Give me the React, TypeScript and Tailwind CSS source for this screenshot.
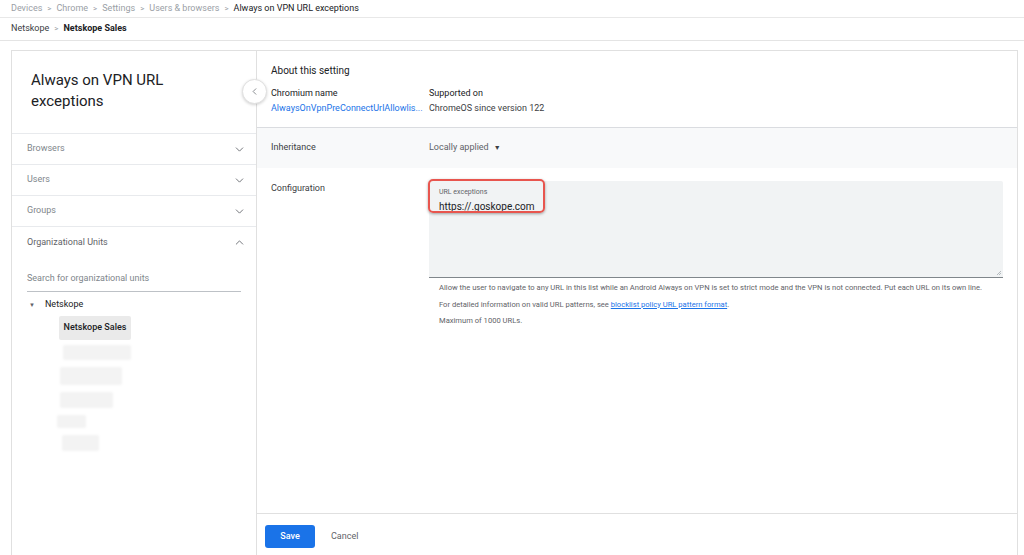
import { ChevronDown, ChevronUp, ChevronLeft } from "lucide-react";

const font = { fontFamily: "Roboto, 'Liberation Sans', sans-serif" };

function Crumbs() {
  const items = ["Devices", "Chrome", "Settings", "Users & browsers"];
  return (
    <div className="flex h-[18px] items-center border-b border-[#e8e8e8] px-[11px] text-[9px] text-[#9aa0a6]">
      {items.map((it) => (
        <span key={it} className="flex items-center">
          <span>{it}</span>
          <span className="mx-[5px] text-[8px]">&gt;</span>
        </span>
      ))}
      <span className="text-[#202124]">Always on VPN URL exceptions</span>
    </div>
  );
}

function OuCrumbs() {
  return (
    <div className="flex h-[23px] items-center border-b border-[#e4e4e4] px-[11px] text-[9px] text-[#3c4043]">
      <span>Netskope</span>
      <span className="mx-[5px] text-[8px] text-[#9aa0a6]">&gt;</span>
      <span className="font-bold text-[#202124]">Netskope Sales</span>
    </div>
  );
}

function SideRow({ label }: { label: string }) {
  return (
    <div className="flex h-[31px] items-center justify-between border-b border-[#e8eaed] pl-[15px] pr-[10px] text-[9px] text-[#80868b]">
      <span>{label}</span>
      <ChevronDown size={13} strokeWidth={1.6} className="text-[#5f6368]" />
    </div>
  );
}

function Sidebar() {
  const blurs = [
    "ml-[51px] w-[68px] h-[15px]",
    "ml-[48px] w-[62px] h-[18px]",
    "ml-[48px] w-[53px] h-[16px]",
    "ml-[45px] w-[29px] h-[13px]",
    "ml-[50px] w-[37px] h-[16px]",
  ];
  return (
    <div className="flex w-[245px] shrink-0 flex-col border-r border-[#e0e0e0]">
      <div className="h-[83px] border-b border-[#e8eaed] px-[19px] pt-[19px] text-[15px] leading-[21px] text-[#202124]">
        Always on VPN URL
        <br />
        exceptions
      </div>
      <SideRow label="Browsers" />
      <SideRow label="Users" />
      <SideRow label="Groups" />
      <div className="flex h-[31px] items-center justify-between pl-[15px] pr-[10px] text-[9px] text-[#5f6368]">
        <span>Organizational Units</span>
        <ChevronUp size={13} strokeWidth={1.6} />
      </div>
      <div className="mx-[15px] mt-[14px] w-[214px] border-b border-[#bdc1c6] pb-[5px] text-[9px] text-[#80868b]">
        Search for organizational units
      </div>
      <div className="mt-[6px] flex items-center pl-[17px] text-[9px] text-[#202124]">
        <span className="mr-[10px] text-[6px] text-[#5f6368]">▼</span>
        <span>Netskope</span>
      </div>
      <div className="ml-[47px] mt-[5px] w-[72px] rounded-[2px] bg-[#eaeaea] py-[5px] text-center text-[9px] font-medium text-[#202124]">
        Netskope Sales
      </div>
      <div className="mt-[5px] flex flex-col gap-[7px]">
        {blurs.map((b, i) => (
          <div key={i} className={`${b} rounded-[2px] bg-[#f3f3f3] blur-[1px]`} />
        ))}
      </div>
    </div>
  );
}

function Main() {
  return (
    <div className="relative flex min-w-0 flex-1 flex-col">
      <div className="absolute left-[-15px] top-[28px] flex h-[25px] w-[25px] items-center justify-center rounded-full border border-[#e0e0e0] bg-white shadow-[0_1px_3px_rgba(0,0,0,0.18)]">
        <ChevronLeft size={11} strokeWidth={1.6} className="text-[#5f6368]" />
      </div>
      <div className="h-[77px] border-b border-[#dadce0] px-[14px] pt-[12px]">
        <div className="text-[10px] text-[#202124]">About this setting</div>
        <div className="mt-[9px] flex text-[9px]">
          <div className="w-[158px]">
            <div className="text-[#202124]">Chromium name</div>
            <div className="mt-[1px] text-[#1a73e8]">AlwaysOnVpnPreConnectUrlAllowlis...</div>
          </div>
          <div>
            <div className="text-[#202124]">Supported on</div>
            <div className="mt-[1px] text-[#3c4043]">ChromeOS since version 122</div>
          </div>
        </div>
      </div>
      <div className="flex h-[40px] items-center bg-[#f8f9fa] px-[14px] text-[9px]">
        <span className="w-[158px] text-[#3c4043]">Inheritance</span>
        <span className="flex items-center text-[#5f6368]">
          Locally applied
          <span className="ml-[5px] text-[7px] text-[#3c4043]">▼</span>
        </span>
      </div>
      <div className="flex flex-1 px-[14px] pt-[13px]">
        <span className="mt-[1px] w-[158px] shrink-0 text-[9px] text-[#3c4043]">Configuration</span>
        <div className="flex-1">
          <div className="relative h-[97px] rounded-t-[2px] border-b border-[#80868b] bg-[#f1f3f4]">
            <div className="absolute left-[-1px] top-[-2px] h-[34px] w-[117px] rounded-[5px] border-[2.5px] border-[#e8554e] shadow-[0_1px_3px_rgba(0,0,0,0.35)]" />
            <div className="px-[10px] pt-[6px]">
              <div className="text-[7px] text-[#5f6368]">URL exceptions</div>
              <div className="mt-[1px] text-[10px] text-[#202124]">https://.goskope.com</div>
            </div>
            <svg className="absolute bottom-[1px] right-[1px]" width="6" height="6" viewBox="0 0 6 6">
              <path d="M1 5L5 1M3 5L5 3" stroke="#9aa0a6" strokeWidth="0.7" />
            </svg>
          </div>
          <div className="mt-[2px] px-[10px] text-[7.6px] leading-[16.5px] text-[#5f6368]">
            <div>
              Allow the user to navigate to any URL in this list while an Android Always on VPN is set to strict mode and the VPN is not connected. Put each URL on its own line.
            </div>
            <div>
              For detailed information on valid URL patterns, see{" "}
              <span className="text-[#1a73e8] underline">blocklist policy URL pattern format</span>.
            </div>
            <div>Maximum of 1000 URLs.</div>
          </div>
        </div>
      </div>
      <div className="flex h-[42px] shrink-0 items-center gap-[16px] border-t border-[#e0e0e0] pl-[8px] pt-[4px]">
        <button className="h-[23px] w-[50px] rounded-[3px] bg-[#1a73e8] text-[9px] font-medium text-white">
          Save
        </button>
        <span className="text-[9px] text-[#5f6368]">Cancel</span>
      </div>
    </div>
  );
}

export default function App() {
  return (
    <div style={font} className="h-[555px] w-[1024px] overflow-hidden bg-white">
      <Crumbs />
      <OuCrumbs />
      <div className="ml-[11px] mr-[6px] mt-[9px] flex h-[505px] border border-b-0 border-[#e0e0e0]">
        <Sidebar />
        <Main />
      </div>
    </div>
  );
}
